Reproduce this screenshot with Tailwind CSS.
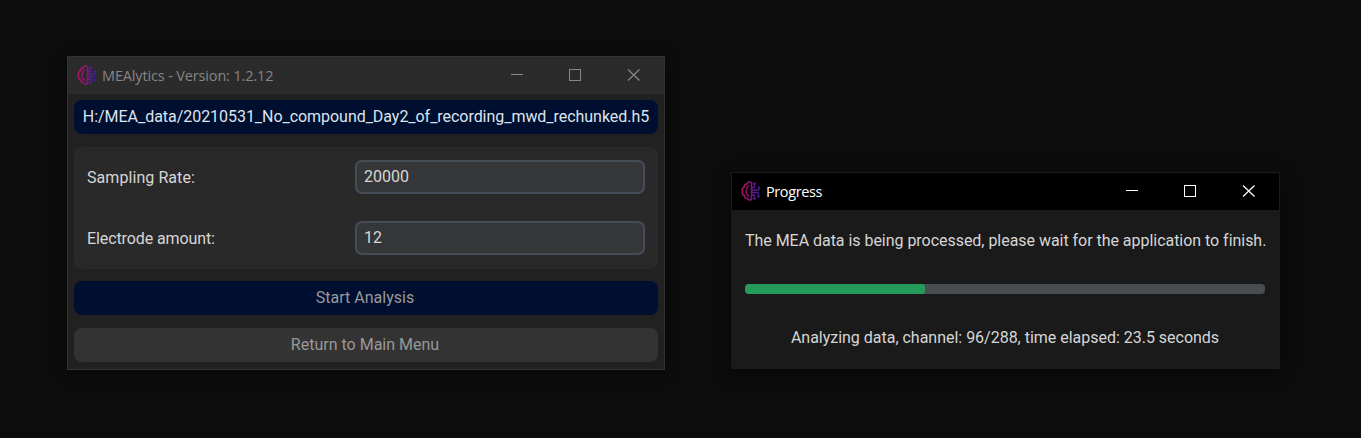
<!DOCTYPE html>
<html lang="en">
<head>
<meta charset="utf-8">
<title>MEAlytics</title>
<script src="https://cdn.jsdelivr.net/npm/@tailwindcss/browser@4"></script>
</head>
<body class="relative h-[438px] w-[1361px] overflow-hidden bg-[#0c0c0c] font-['Roboto',sans-serif] text-[16px] leading-[20px] text-[#dce4ee]">
<svg class="absolute size-0">
  <defs>
    <linearGradient id="g" gradientUnits="userSpaceOnUse" x1="0" y1="0" x2="20" y2="0"><stop offset="0" stop-color="#c0125a"/><stop offset=".5" stop-color="#86188a"/><stop offset="1" stop-color="#2424a8"/></linearGradient>
    <symbol id="brain" viewBox="0 0 20 20">
      <g fill="none" stroke="url(#g)" stroke-width="1.7" stroke-linejoin="round">
        <path d="M10.5 1.5C8.600.5 6.500 1 6.200 2.800 4 2.800 3 4.200 3.400 5.800 1.500 7 .9 9 1.600 10.500.9 12.400 1.800 14 3.400 14.400 3.200 16.400 4.600 17.400 6.200 17.300 6.700 19 9 19.400 10.500 18.500Z"/>
        <path d="M8.300 5C6.500 4.500 5.900 5.500 6.200 7 4.800 8.200 4.700 11.300 5.900 12.800 6 14.500 7 15.300 8.500 14.900" stroke-width="1.400"/>
        <path d="M10.500 6.500h3V2.500M10.500 9h7.500V6M10.500 11.500h7V16M10.500 14h3V18" stroke-width="1.300"/>
      </g>
      <g fill="url(#g)"><circle cx="13.500" cy="2.500" r="1.300"/><circle cx="18" cy="6.500" r="1.300"/><circle cx="17.500" cy="15.500" r="1.300"/><circle cx="13.500" cy="17.500" r="1.300"/></g>
    </symbol>
  </defs>
</svg>

<main class="absolute left-[67px] top-[56px] flex h-[314px] w-[598px] flex-col border border-[#333333] bg-[#212121] shadow-[0_2px_12px_rgba(0,0,0,0.4)]">
  <header class="flex h-[37px] shrink-0 items-center bg-[#2b2b2b] pl-[9px] text-[#868686]">
    <svg class="mb-px size-5 opacity-90"><use href="#brain"/></svg>
    <h1 class="ml-[5px] whitespace-nowrap font-['Open_Sans',sans-serif] text-[14.5px] tracking-[-0.15px]">MEAlytics - Version: 1.2.12</h1>
    <svg class="mb-px ml-auto mr-6 h-3 w-[130px]" fill="none" stroke="currentColor"><path d="M1 5.500h12M59.500.5h11v11h-11z" shape-rendering="crispEdges"/><path d="M118 .5l11.500 11M129.500.5L118 11.500" stroke-width="1.200"/></svg>
  </header>
  <div class="flex flex-col px-[6px] pt-[6px]">
    <div class="flex h-[34px] items-center justify-center rounded-[8px] bg-[#000f30] tracking-[-0.04px] whitespace-nowrap">H:/MEA_data/20210531_No_compound_Day2_of_recording_mwd_rechunked.h5</div>
    <div class="mt-[13px] flex h-[122px] flex-col gap-[27px] rounded-[7px] bg-[#292929] px-[13px] pt-[13px] text-[#d6d6d6]">
      <div class="flex items-center justify-between">
        <span class="pt-[1px] tracking-[0.07px]">Sampling Rate:</span>
        <div class="flex h-[34px] w-[290px] items-center rounded-[7px] border-2 border-[#454d57] bg-[#343638] pl-[7px]">20000</div>
      </div>
      <div class="flex items-center justify-between">
        <span class="pt-[1px] tracking-[-0.1px]">Electrode amount:</span>
        <div class="flex h-[34px] w-[290px] items-center rounded-[7px] border-2 border-[#454d57] bg-[#343638] pl-[7px]">12</div>
      </div>
    </div>
    <div class="mt-[12px] flex h-[34px] items-center justify-center rounded-[8px] bg-[#000f30] pr-[2px] text-[#999999]">Start Analysis</div>
    <div class="mt-[13px] flex h-[34px] items-center justify-center rounded-[8px] bg-[#333333] pr-[2px] text-[#999999]">Return to Main Menu</div>
  </div>
</main>

<section class="absolute left-[731px] top-[172px] flex h-[197px] w-[549px] flex-col border border-[#1b1b1b] bg-[#1a1a1a] shadow-[0_4px_16px_rgba(0,0,0,0.4)]">
  <header class="flex h-[37px] shrink-0 items-center bg-black pl-[9px] text-white">
    <svg class="mb-px size-5 opacity-90"><use href="#brain"/></svg>
    <h2 class="ml-[5px] whitespace-nowrap font-['Open_Sans',sans-serif] text-[14.5px] tracking-[-0.4px]">Progress</h2>
    <svg class="mb-px ml-auto mr-6 h-3 w-[130px]" fill="none" stroke="currentColor"><path d="M1 5.500h12M59.500.5h11v11h-11z" shape-rendering="crispEdges"/><path d="M118 .5l11.500 11M129.500.5L118 11.500" stroke-width="1.200"/></svg>
  </header>
  <div class="flex flex-col px-[13px] pt-[21px] text-[#d6d6d6]">
    <p class="tracking-[-0.035px] whitespace-nowrap">The MEA data is being processed, please wait for the application to finish.</p>
    <div class="mt-[33px] h-[10px] w-[520px] overflow-hidden rounded-[4px] bg-[#4a4d50]">
      <div class="h-full w-[180px] rounded-[3px] bg-[#259b59]"></div>
    </div>
    <p class="mt-[34px] pr-px text-center tracking-[-0.015px] whitespace-nowrap">Analyzing data, channel: 96/288, time elapsed: 23.5 seconds</p>
  </div>
</section>
</body>
</html>
